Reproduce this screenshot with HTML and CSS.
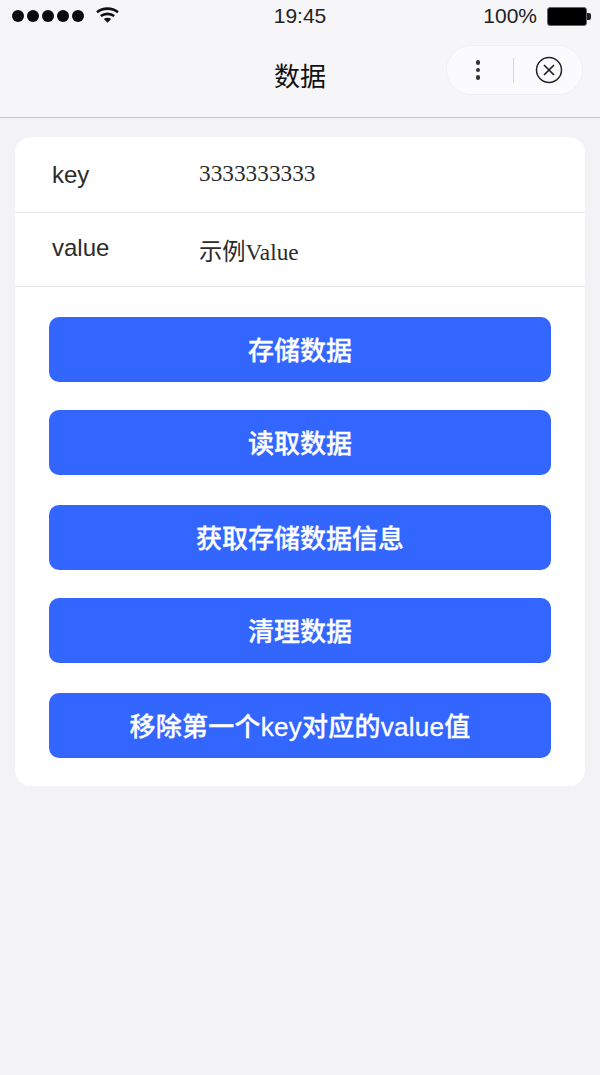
FILE: index.html
```html
<!DOCTYPE html>
<html lang="zh-CN">
<head>
    <meta charset="UTF-8">
    <meta name="viewport" content="width=device-width, initial-scale=1.0">
    <title>数据</title>
    <link rel="stylesheet" href="styles.css">
</head>
<body>
    <div class="top-bar">
        <div class="status-bar">
            <div class="status-left">
                <div class="signal">
                    <span class="signal-dot"></span>
                    <span class="signal-dot"></span>
                    <span class="signal-dot"></span>
                    <span class="signal-dot"></span>
                    <span class="signal-dot"></span>
                </div>
                <svg class="wifi" width="23" height="16" viewBox="0 0 23 16">
                    <path d="M1 5.200C7 .4 16 .4 22 5.200" fill="none" stroke="#111" stroke-width="2.600"/>
                    <path d="M4.800 9.100C8.600 6.100 14.400 6.100 18.200 9.100" fill="none" stroke="#111" stroke-width="2.600"/>
                    <path d="M7.800 12 11.500 15.800 15.200 12C13 10.400 10 10.400 7.800 12Z" fill="#111"/>
                </svg>
            </div>
            <div class="status-time">19:45</div>
            <div class="status-right">
                <span class="battery-text">100%</span>
                <div class="battery">
                    <div class="battery-body"></div>
                    <div class="battery-cap"></div>
                </div>
            </div>
        </div>
        <div class="nav-bar">
            <h1 class="nav-title">数据</h1>
            <div class="capsule">
                <div class="capsule-more">
                    <span class="more-dot"></span>
                    <span class="more-dot"></span>
                    <span class="more-dot"></span>
                </div>
                <div class="capsule-line"></div>
                <svg class="capsule-close" width="28" height="28" viewBox="0 0 28 28">
                    <circle cx="14" cy="14" r="12.500" fill="none" stroke="#222" stroke-width="1.500"/>
                    <path d="M9 9 19 19M19 9 9 19" fill="none" stroke="#222" stroke-width="1.700"/>
                </svg>
            </div>
        </div>
    </div>

    <div class="card">
        <div class="field field-first">
            <span class="field-label">key</span>
            <span class="field-value">3333333333</span>
        </div>
        <div class="field field-second">
            <span class="field-label">value</span>
            <span class="field-value">示例Value</span>
        </div>
        <div class="actions">
            <button class="btn">存储数据</button>
            <button class="btn">读取数据</button>
            <button class="btn">获取存储数据信息</button>
            <button class="btn">清理数据</button>
            <button class="btn btn-long">移除第一个key对应的value值</button>
        </div>
    </div>
</body>
</html>
```

FILE: styles.css
```css
/* Reset and Base Styles */
* {
    margin: 0;
    padding: 0;
    box-sizing: border-box;
}

body {
    width: 600px;
    height: 1075px;
    overflow: hidden;
    background: #f3f2f5;
    font-family: "Liberation Sans", "Noto Sans CJK SC", sans-serif;
    color: #111;
}

/* Top Bar */
.top-bar {
    height: 118px;
    background: #f6f5f8;
    border-bottom: 1px solid #c9c8cb;
}

.status-bar {
    height: 32px;
    padding: 0 9px 0 12px;
    display: grid;
    grid-template-columns: 1fr auto 1fr;
    align-items: center;
}

.status-left {
    display: flex;
    align-items: center;
    gap: 12px;
}

.signal {
    display: flex;
    gap: 3px;
    margin-bottom: 1px;
}

.signal-dot {
    width: 12px;
    height: 12px;
    border-radius: 50%;
    background: #0b0b0b;
}

.wifi {
    margin-bottom: 3px;
}

.status-time {
    margin-right: 3px;
    font-size: 21px;
    color: #222;
}

.status-right {
    display: flex;
    justify-content: flex-end;
    align-items: center;
    gap: 10px;
}

.battery-text {
    font-size: 21px;
    color: #222;
}

.battery {
    display: flex;
    align-items: center;
}

.battery-body {
    width: 40px;
    height: 19px;
    background: #000;
    border: 1px solid #666;
    border-radius: 3px;
}

.battery-cap {
    width: 4px;
    height: 7px;
    background: #222;
    border-radius: 0 2px 2px 0;
}

/* Nav Bar */
.nav-bar {
    height: 85px;
    position: relative;
    display: flex;
    align-items: center;
    justify-content: center;
}

.nav-title {
    font-size: 26px;
    font-weight: 400;
    color: #111;
}

.capsule {
    position: absolute;
    top: 13px;
    left: 446px;
    width: 137px;
    height: 50px;
    display: flex;
    align-items: center;
    background: #fbfafc;
    border: 1px solid #f0eff2;
    border-radius: 25px;
}

.capsule-more {
    width: 62px;
    margin-right: 4px;
    display: flex;
    flex-direction: column;
    align-items: center;
    gap: 3px;
}

.more-dot {
    width: 4.500px;
    height: 4.500px;
    border-radius: 50%;
    background: #333;
}

.capsule-line {
    width: 1px;
    height: 25px;
    background: #d8d8da;
}

.capsule-close {
    margin: 0 0 1px 21px;
}

/* Card */
.card {
    margin: 19px 15px 0;
    height: 649px;
    background: #fff;
    border-radius: 16px;
}

.field {
    height: 76px;
    padding: 0 37px 2px;
    display: flex;
    align-items: center;
    border-bottom: 1px solid #e6e6e8;
}

.field-first .field-label {
    padding-top: 2px;
}

.field-second {
    height: 74px;
    padding-bottom: 4px;
}

.field-label {
    width: 147px;
    font-size: 24px;
    color: #2b2b2b;
}

.field-value {
    font-family: "Liberation Serif", "Noto Sans CJK SC", serif;
    font-size: 23.300px;
    color: #2b2b2b;
}

.field-second .field-value {
    padding-top: 5px;
}

/* Buttons */
.actions {
    padding: 30px 34px 0;
    display: flex;
    flex-direction: column;
    gap: 28px;
}

.btn {
    height: 65px;
    padding-bottom: 2px;
    background: #3366ff;
    color: #fff;
    border: none;
    border-radius: 10px;
    font-family: inherit;
    font-size: 26px;
    font-weight: 500;
    -webkit-text-stroke: 0.300px #fff;
}

.btn-long {
    letter-spacing: 0.250px;
}

.btn:nth-child(odd):not(:first-child) {
    margin-top: 2px;
}
```
